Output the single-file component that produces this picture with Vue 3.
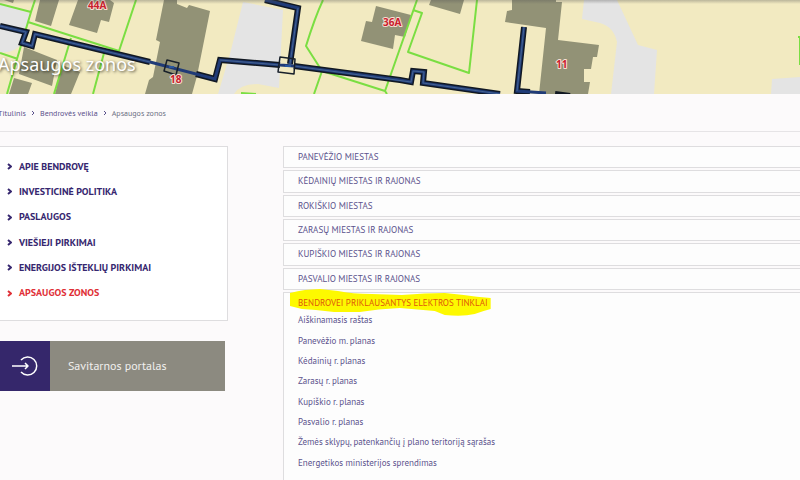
<script setup>
const crumbs = ['Titulinis', 'Bendrovės veikla']
const menu = [
  'Apie bendrovę',
  'Investicinė politika',
  'Paslaugos',
  'Viešieji pirkimai',
  'Energijos išteklių pirkimai',
  'Apsaugos zonos',
]
const regions = [
  'Panevėžio miestas',
  'Kėdainių miestas ir rajonas',
  'Rokiškio miestas',
  'Zarasų miestas ir rajonas',
  'Kupiškio miestas ir rajonas',
  'Pasvalio miestas ir rajonas',
]
const documents = [
  'Aiškinamasis raštas',
  'Panevėžio m. planas',
  'Kėdainių r. planas',
  'Zarasų r. planas',
  'Kupiškio r. planas',
  'Pasvalio r. planas',
  'Žemės sklypų, patenkančių į plano teritoriją sąrašas',
  'Energetikos ministerijos sprendimas',
]
</script>

<template>
  <div class="page">
    <header class="banner">
      <svg class="map" viewBox="0 0 800 94" preserveAspectRatio="xMinYMin slice" aria-hidden="true">
        <defs>
          <linearGradient id="shade" x1="0" y1="0" x2="0" y2="1">
            <stop offset="0" stop-color="#555" stop-opacity=".35" />
            <stop offset="1" stop-color="#555" stop-opacity="0" />
          </linearGradient>
        </defs>
        <rect width="800" height="94" fill="#f2eac1" />
        <g fill="#e4e4e4">
          <path d="M0 3 13 8 30 13 22 43Q14 54 0 52Z" />
          <path d="M243 2 283 10 279 88 258 84Q240 84 234 94H218L230 54Z" />
          <path d="M584 0H617L638 45 657 50 654 94H611L617 42Q614 27 600 23L582 19Z" />
          <path d="M772 79 800 77V94H771Z" />
        </g>
        <g fill="#929276">
          <path d="M4 0H14L13 3Z M40 0H59L51 26 35 21Z M78 0H110L114 3 109 22 101 20 97 33 69 25Z" />
          <path d="M24 47 57 60 52 86 19 74Z M14 78 32 83 28 94H9Z M62 65 80 72 71 94H55Z" />
          <path d="M173 0H177V4L187 8 189 5 210 11 197 76 192 94H145L149 80 153 77 160 42 156 40 164 0Z" />
          <path d="M376 6 411 15 405 37 395 35 393 49 361 41 366 21 372 22Z" />
          <path d="M431 0H464L460 14 429 5Z M512 0H556V2H562L558 40 599 45 597 57H593L591 69H584V82H590L588 94H539L546 28 505 22 507 11 512 10Z" />
        </g>
        <g class="parcels">
          <path d="M0 4 31 12 35 0 M31 12 17 59 7 94 M28 22 119 51 136 0 M71 38 54 94 M104 53 93 94 M0 53 18 59" />
          <path d="M323 0Q315 17 306 46L322 71 314 94 M322 71 385 91 417 0 M385 91 387 94 M413 10 422 13 408 52 469 73 477 0 M241 93 256 94 M798 37H800V65" />
        </g>
        <g class="cable-edge">
          <path d="M0 26 26 32 22 43 32 46 35 34 150 62" />
          <path d="M196 74 215 79 220 60 280 65 M265 0 298 8 290 64 M294 66 400 80 411 82 413 71 424 72 423 83 500 94 M524 27 517 91 530 92 M555 94 570 96" />
        </g>
        <g class="cable">
          <path d="M0 26 26 32 22 43 32 46 35 34 150 62 215 79 220 60 280 65 M265 0 298 8 290 64 M280 65 294 66 400 80 411 82 413 71 424 72 423 83 500 94 M524 27 517 91 546 93" />
        </g>
        <g class="cable-core">
          <path d="M0 26 26 32 22 43 32 46 35 34 150 62 M220 60 280 65 M298 8 290 64 M294 66 411 82 413 71 424 72 423 83 500 94 M524 27 517 91" />
        </g>
        <path class="node" d="M167 60 179 63 176 75 164 71Z M280 57 295 59 294 74 278 72Z" />
        <path d="M169 66h5v2h-5z M285 65h6v2h-6z" fill="#2856a0" />
        <g class="plot">
          <text x="88" y="9">44A</text>
          <text x="170" y="83">18</text>
          <text x="383" y="26">36A</text>
          <text x="556" y="68">11</text>
        </g>
        <rect width="800" height="4" fill="url(#shade)" />
      </svg>
      <h1>Apsaugos zonos</h1>
    </header>

    <nav class="crumbs" aria-label="Kelias">
      <template v-for="crumb in crumbs" :key="crumb">
        <a href="#">{{ crumb }}</a>
        <svg class="chevron" viewBox="0 0 4 6" aria-hidden="true"><path d="M1 1 3 3 1 5" /></svg>
      </template>
      <span>Apsaugos zonos</span>
    </nav>

    <div class="columns">
      <aside>
        <nav class="menu" aria-label="Bendrovės veikla">
          <a v-for="(item, i) in menu" :key="item" href="#" :class="{ active: i === menu.length - 1 }">
            <svg viewBox="0 0 5 7" aria-hidden="true"><path d="M1 1 4 3.500 1 6" /></svg>
            {{ item }}
          </a>
        </nav>
        <a class="portal" href="#">
          <span class="portal-icon">
            <svg viewBox="0 0 28 22" aria-hidden="true">
              <path d="M10 5A9 9 0 1 1 10 17 M1 11H17 M14 8 17 11 14 14" />
            </svg>
          </span>
          <span class="portal-label">Savitarnos portalas</span>
        </a>
      </aside>

      <main>
        <ul class="regions">
          <li v-for="region in regions" :key="region"><a href="#">{{ region }}</a></li>
        </ul>
        <section class="open">
          <h2>
            <svg class="marker" viewBox="0 0 202 28" preserveAspectRatio="none" aria-hidden="true">
              <path d="M0 5Q8 3 15 2L30 1 48 3Q62 6 82 6L112 7Q136 5 155 5L174 7Q187 9 201 10V21L194 23 185 26Q173 29 155 27L145 23 110 20Q88 21 70 24L44 24 26 22 12 21 0 18Z" />
            </svg>
            <a href="#">Bendrovei priklausantys elektros tinklai</a>
          </h2>
          <ul class="documents">
            <li v-for="doc in documents" :key="doc"><a href="#">{{ doc }}</a></li>
          </ul>
        </section>
      </main>
    </div>
  </div>
</template>

<style>
body {
  margin: 0;
  background: #fcfafb;
}
</style>

<style scoped>
* {
  box-sizing: border-box;
}
.page {
  height: 100vh;
  overflow: hidden;
  background: #fcfafb;
  color: #5b528c;
  font: 9px/12px "PT Sans", "Noto Sans", sans-serif;
}
a {
  color: inherit;
  text-decoration: none;
}
ul {
  margin: 0;
  padding: 0;
  list-style: none;
}
svg {
  flex: none;
  fill: none;
  stroke-linejoin: round;
}
.banner {
  position: relative;
  display: flex;
  align-items: flex-end;
  height: 94px;
  padding-bottom: 16px;
  overflow: hidden;
}
.map {
  position: absolute;
  inset: 0;
  width: 100%;
  height: 100%;
}
.parcels {
  stroke: #7ade42;
  stroke-width: 2;
}
.cable-edge {
  stroke: #111822;
  stroke-width: 6;
  stroke-linejoin: miter;
}
.cable {
  stroke: #203b77;
  stroke-width: 3;
  stroke-linejoin: miter;
}
.cable-core {
  stroke: #456391;
  stroke-width: 1;
}
.node {
  stroke: #18202a;
  stroke-width: 1.5;
}
.plot {
  fill: #c9202e;
  stroke: #f6dfd2;
  stroke-width: 2px;
  paint-order: stroke;
  font: bold 10px "Noto Sans", sans-serif;
}
h1 {
  position: relative;
  margin: 0 0 0 -2px;
  color: #fff;
  font: 400 18px/28px "Noto Sans", sans-serif;
  text-shadow: 1px 1px 3px rgba(0, 0, 0, 0.7);
}
.crumbs {
  display: flex;
  align-items: center;
  gap: 5px;
  height: 38px;
  margin-left: -2px;
  border-bottom: 1px solid #e6e4e6;
  font-size: 8px;
}
.crumbs span {
  color: #6d7184;
}
.chevron {
  width: 4px;
  height: 6px;
  stroke: #5b528c;
}
.columns {
  display: grid;
  grid-template-columns: 228px 1fr;
  column-gap: 55px;
  padding-top: 14px;
}
.menu {
  display: flex;
  flex-direction: column;
  min-height: 175px;
  padding: 7px 0 14px;
  border: 1px solid #dedddf;
  border-left: 0;
  background: #fff;
  color: #36276f;
  font-size: 10px;
  font-weight: 700;
  text-transform: uppercase;
}
.menu a {
  display: flex;
  flex: 1;
  align-items: center;
  gap: 7px;
  padding-left: 7px;
}
.menu svg {
  width: 5px;
  height: 7px;
  stroke: currentColor;
  stroke-width: 2;
}
.menu .active {
  color: #df3037;
}
.portal {
  display: flex;
  height: 50px;
  margin: 20px 3px 0 0;
  background: #8c8a80;
  color: #f1f0ee;
  font-size: 12px;
}
.portal-icon {
  display: grid;
  place-items: center;
  width: 50px;
  background: #35276b;
}
.portal-icon svg {
  width: 28px;
  height: 22px;
  stroke: #fff;
  stroke-width: 1.5;
}
.portal-label {
  align-self: center;
  padding-left: 18px;
}
.regions {
  display: flex;
  flex-direction: column;
  gap: 2px;
  min-height: 144px;
  text-transform: uppercase;
}
.regions li {
  display: flex;
  flex: 1;
  align-items: center;
  padding-left: 14px;
  border: 1px solid #dedddf;
  border-right: 0;
  background: #fdfdfd;
}
.open {
  margin-top: 2px;
  padding: 2px 0 16px 14px;
  border: 1px solid #dedddf;
  border-right: 0;
  background: #fdfdfd;
}
h2 {
  position: relative;
  width: fit-content;
  margin: 0;
  color: #e0560b;
  font: inherit;
  line-height: 15px;
  text-transform: uppercase;
}
h2 a {
  position: relative;
}
.marker {
  position: absolute;
  top: -7px;
  left: -8px;
  width: calc(100% + 12px);
  height: 28px;
  fill: #fdf900;
}
.documents {
  display: grid;
  grid-auto-rows: 1fr;
  min-height: 163px;
}
.documents li {
  display: flex;
  align-items: center;
}
</style>
